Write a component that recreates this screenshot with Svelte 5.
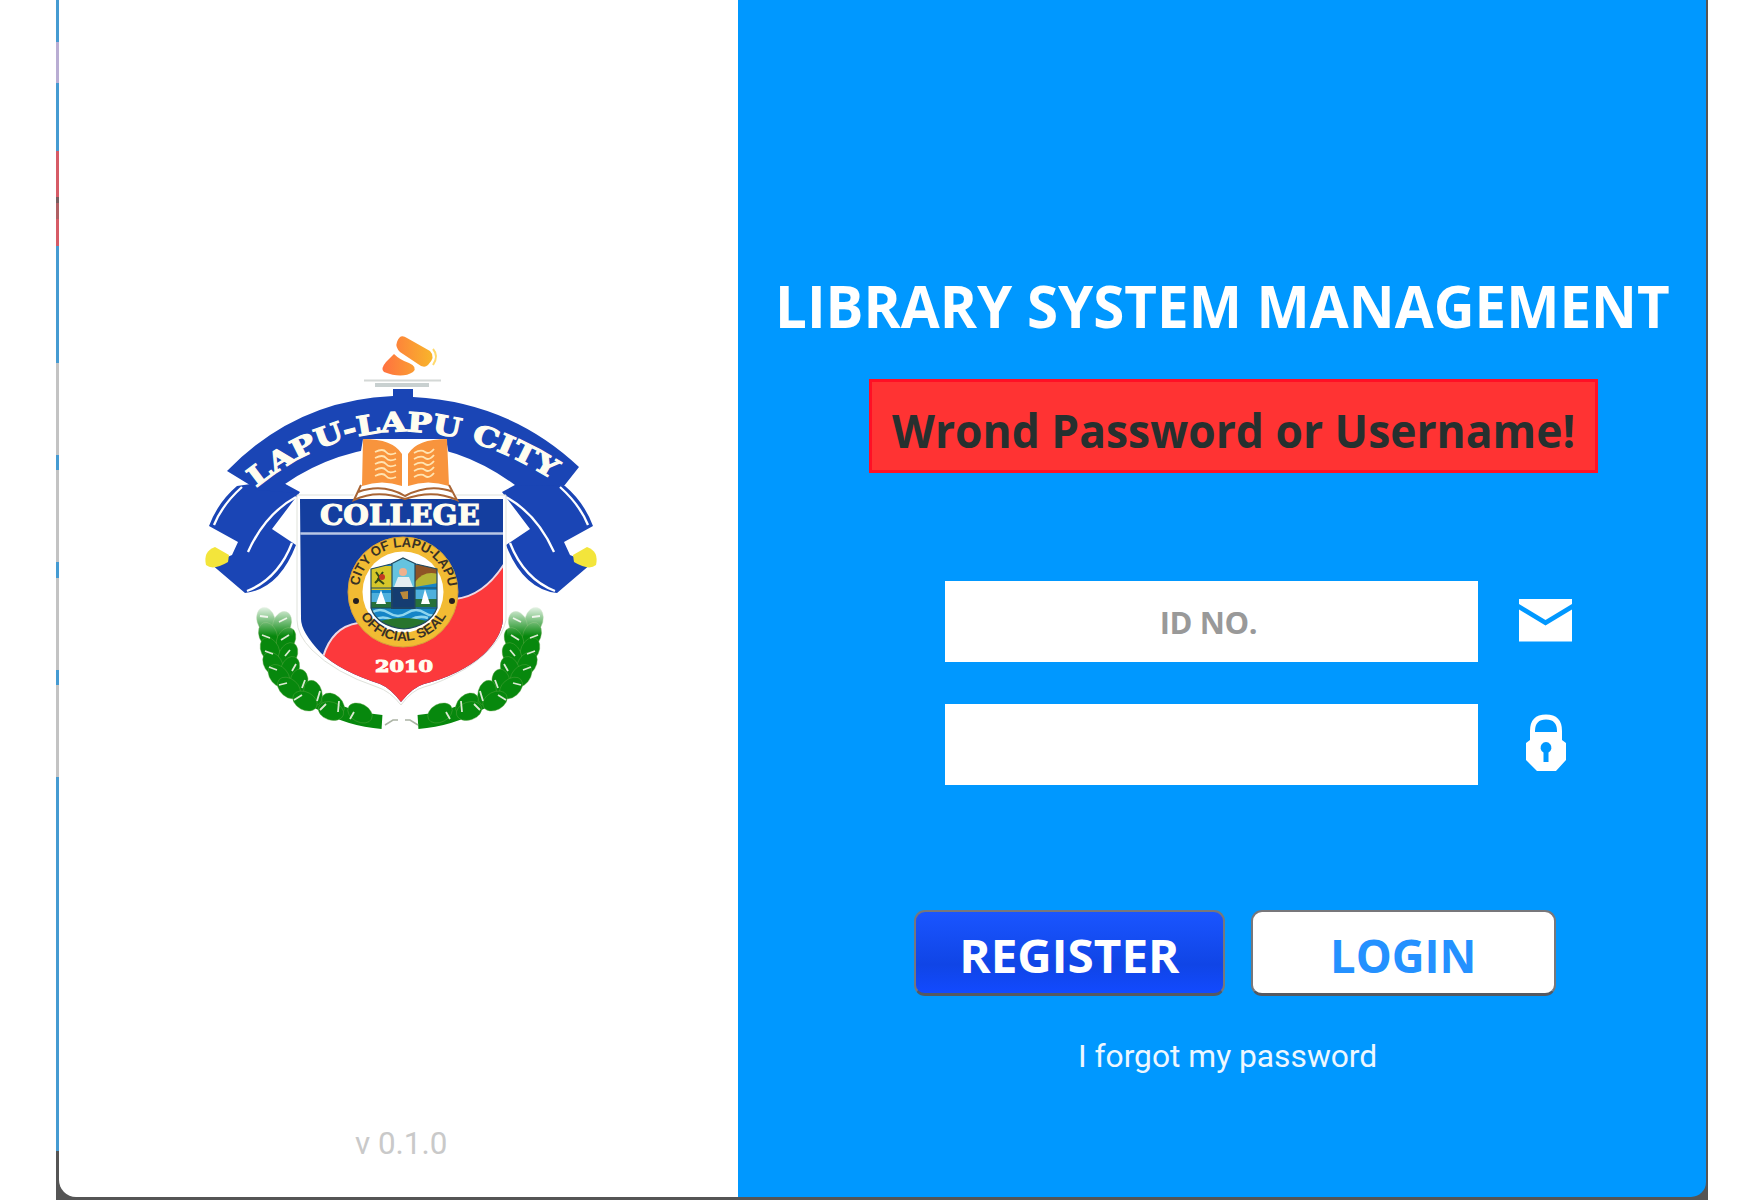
<script>
  const leaves = [
    [266, 620, 75], [282, 624, 110], [268, 635, 70], [286, 640, 115], [270, 650, 65], [288, 655, 115],
    [273, 664, 58], [290, 669, 112], [279, 676, 50], [299, 682, 98], [289, 688, 40], [313, 693, 75],
    [305, 701, 28], [333, 704, 42], [331, 711, 18], [360, 713, 28]
  ];
</script>

{#snippet branch()}
  <path d="M274 618Q277 684 318 702Q350 720 382 722" fill="none" stroke="#07880d" stroke-width="14" />
  {#each leaves as [x, y, a]}
    <ellipse cx={x} cy={y} rx="13" ry="9" transform="rotate({a} {x} {y})" fill="#07880d" stroke="#5fa646" stroke-width=".4" />
  {/each}
  <path d="M260 616l8 1m11 5 8-4M262 635l8 3m11 2 8-5M265 651l8 3m12 2 5-6M269 667l8 3m15 1 4-7M279 685l8-2m15 5 3-8M294 700l8-5m15 6 3-10M320 710l6-6m12 8 1-11M350 719l4-7" stroke="#dbe9d2" stroke-width="1.8" />
  <rect x="248" y="598" width="45" height="38" fill="url(#fade)" />
{/snippet}

{#snippet ribbon()}
  <path d="M237 486Q218 502 209 526L238 542 232 555 211 564 245 593Q279 589 296 545L272 529 300 492 278 480Z" fill="#1a45b5" />
  <path d="M242 487Q222 505 214 525M296 497Q265 514 248 552M292 543Q278 579 247 591" fill="none" stroke="#fff" stroke-width="2.3" />
  <path d="M215 547Q203 551 206 565Q213 571 228 562L229 555Z" fill="#f3e53b" />
{/snippet}

<main>
  <div class="edge"></div>
  <section class="brand">
    <svg class="crest" viewBox="190 320 420 420" role="img" aria-label="Lapu-Lapu City College">
      <defs>
        <linearGradient id="flame"><stop stop-color="#ff7140" /><stop offset="1" stop-color="#f8b52b" /></linearGradient>
        <linearGradient id="fade" x2="0" y2="1"><stop offset=".15" stop-color="#fff" /><stop offset="1" stop-color="#fff" stop-opacity="0" /></linearGradient>
        <clipPath id="shield"><path d="M300 499H503V619Q502 637 483 655Q460 675 424 684Q413 687 401 702Q390 688 380 684Q340 671 321 653Q301 632 301 619Z" /></clipPath>
        <clipPath id="arms"><path d="M371 569L391 564 403 558 416 564 437 569V608Q430 626 404 629Q377 626 371 608Z" /></clipPath>
        <path id="motto" d="M256 488Q395 376 562 486" />
        <path id="city" d="M358.500 592A45 45 0 1 1 448.500 592" />
        <path id="seal" d="M354.500 592A49 49 0 0 0 452.500 592" />
      </defs>
      <path d="M397 342Q400 333 407 338L430 351Q436 357 428 365Q424 369 418 364L400 352Q395 347 397 342ZM394 354Q400 360 409 363Q418 367 413 372Q402 379 384 372Q380 369 386 362Z" fill="url(#flame)" />
      <path d="M433 349Q439 356 433 365" fill="none" stroke="#ffda6d" stroke-width="2" />
      <path d="M364 380.500H441" stroke="#d4d8d6" stroke-width="2" /><path d="M375 385H429" stroke="#c8d0d0" stroke-width="4" />
      {@render ribbon()}
      <g transform="translate(802 0) scale(-1 1)">{@render ribbon()}</g>
      <path d="M393 389H413V397Q510 402 579 467L564 486 515 485Q460 445 403 445Q335 449 285 484L295 493 258 490 227 471Q296 400 393 396Z" fill="#1a45b5" />
      <text class="slab motto"><textPath href="#motto" textLength="319" lengthAdjust="spacingAndGlyphs">LAPU-LAPU CITY</textPath></text>
      <path d="M297 495H506V620Q500 647 465 669Q440 683 424 687Q412 690 401 705Q390 691 377 687Q335 673 312 650Q297 635 297 620Z" fill="#fff" stroke="#dfe2db" stroke-width="1" />
      <g clip-path="url(#shield)">
        <path d="M298 499H507V706H298Z" fill="#143e9f" />
        <path d="M323 657Q332 627 358 623L455 599Q485 596 506 561V706H320Z" fill="#fc393c" stroke="#ecd8e5" stroke-width="2" />
        <path d="M300 533.500H503" stroke="#b9c7e5" stroke-width="2.500" />
      </g>
      <text class="slab college" x="320" y="524.500" textLength="160" lengthAdjust="spacingAndGlyphs">COLLEGE</text>
      <path d="M363 439L353 499 397 494 407 499 418 494 457 500 446 439Z" fill="#fff" />
      <path d="M363 439Q393 439 402 454V486Q382 479 362 486ZM447 439Q417 439 408 454V486Q428 479 449 486Z" fill="#f8943d" />
      <path d="M361 485L354 500Q377 489 405 499Q433 489 457 500L449 485M358 492Q383 483 405 496Q430 483 453 492" fill="none" stroke="#a96535" stroke-width="2" />
      {#each [0, 1, 2, 3, 4] as row}
        <path d="M375 {452 + row * 6}q8-4 11 0t10 1M414 {453 + row * 6}q7-4 11-1t9-3" fill="none" stroke="#ffe4b2" stroke-width="1.800" />
      {/each}
      <circle cx="403" cy="592" r="55" fill="#f2bb33" stroke="#d6a13a" stroke-width="1" />
      <circle cx="403" cy="592" r="40.500" fill="#fff" />
      <g clip-path="url(#arms)">
        <path d="M369 557H438V631H369Z" fill="#1585c7" />
        <path d="M369 566H392V590H369Z" fill="#d6c72a" /><path d="M376 572l4 6-5 5m8-11-5 7 6 5" stroke="#334a18" stroke-width="2" fill="none" /><circle cx="382" cy="577" r="3" fill="#c33822" />
        <path d="M392 558H415V590H392Z" fill="#65c3df" /><circle cx="403" cy="572" r="4" fill="#efb08d" />
        <path d="M415 565H438V575Q425 571 415 583Z" fill="#8e5426" /><path d="M415 582Q424 570 438 574V583L415 587Z" fill="#b4b535" />
        <path d="M370 593H392V605H370ZM415 590H438V604H415Z" fill="#4eb0dd" /><path d="M370 602H392V608H370ZM415 599H438V607H415Z" fill="#27713b" />
        <path d="M381 590L386 604H376ZM425 589L430 604H421Z" fill="#fff" />
        <path d="M398 577H409L413 587H394Z" fill="#e3edf1" /><path d="M391 587H415V609H391Z" fill="#153d71" /><path d="M400 592l8-1v8h-5z" fill="#b98a3b" />
        <path d="M371 613q9-6 18 0t18 0 18 0 18-2M374 620q9-5 18 0t18 0 18-2" fill="none" stroke="#8ed5ee" stroke-width="2.500" /><path d="M377 622Q403 614 430 622V631H377Z" fill="#28742d" />
      </g>
      <path d="M371 569L391 564 403 558 416 564 437 569V608Q430 626 404 629Q377 626 371 608ZM392 564V609M415 564V609M371 588H437M371 608H437" fill="none" stroke="#23495d" stroke-width="1.200" />
      <circle cx="356" cy="601" r="3" fill="#241e20" /><circle cx="452" cy="601" r="3" fill="#241e20" />
      <text class="ring"><textPath href="#city" startOffset="6" textLength="130" lengthAdjust="spacingAndGlyphs">CITY OF LAPU-LAPU</textPath></text>
      <text class="ring"><textPath href="#seal" startOffset="25" textLength="104" lengthAdjust="spacingAndGlyphs">OFFICIAL SEAL</textPath></text>
      <text class="slab year" x="375" y="671.500" textLength="58" lengthAdjust="spacingAndGlyphs">2010</text>
      {@render branch()}
      <g transform="translate(800 0) scale(-1 1)">{@render branch()}</g>
      <path d="M385 725l8-5h5M418 725l-8-5h-5" fill="none" stroke="#aab3a4" stroke-width="1.500" />
    </svg>
    <p class="version"><span>v 0.1.0</span></p>
  </section>
  <section class="login">
    <h1><span>LIBRARY SYSTEM MANAGEMENT</span></h1>
    <div class="alert" role="alert"><span>Wrond Password or Username!</span></div>
    <form onsubmit={(e) => e.preventDefault()}>
      <div class="field">
        <input aria-label="ID number" placeholder="ID NO." />
        <svg width="54" height="43" viewBox="0 0 54 43"><path d="M0 0H53V5L26.500 21 0 5ZM0 10.500L26.500 26.500 53 10.500V42.500H0Z" fill="#fff" /></svg>
      </div>
      <div class="field">
        <input aria-label="Password" type="password" />
        <svg width="54" height="58" viewBox="0 0 54 58"><path d="M13.500 26V17Q13.500 3 27 3T40.500 17V26" fill="none" stroke="#fff" stroke-width="5" /><path d="M16 18H38L43 22V26L47 29V46L37 57H18L7 46V29L11 26V22Z" fill="#fff" /><path d="M24.500 48V38.500A5.500 5.500 0 1 1 29.500 38.500V48Z" fill="#0098ff" /></svg>
      </div>
      <div class="actions">
        <button class="register" type="button"><span>REGISTER</span></button>
        <button class="signin" type="submit"><span>LOGIN</span></button>
      </div>
    </form>
    <p class="forgot"><span>I forgot my password</span></p>
  </section>
</main>

<style>
  :global(body) { margin: 0; background: #fff; }
  * { box-sizing: border-box; }
  main { width: 1652px; height: 1200px; margin-left: 56px; display: grid; grid-template-columns: 3px 679px 970px; background: #555; }
  span { display: inline-block; white-space: nowrap; }
  .edge { background: linear-gradient(#459bd2 0 42px, #b9add3 42px 83px, #459bd2 83px 151px, #d65b66 151px 197px, #775e60 197px 203px, #b05f63 203px 219px, #d65b66 219px 246px, #459bd2 246px 363px, #c3c3c3 363px 455px, #459bd2 455px 470px, #c3c3c3 470px 562px, #459bd2 562px 578px, #c3c3c3 578px 670px, #459bd2 670px 685px, #c3c3c3 685px 777px, #459bd2 777px 1151px, #555 1151px); }
  .brand { height: 1197px; background: #fff; border-bottom-left-radius: 17px; display: flex; flex-direction: column; padding: 320px 0 0 131px; }
  .crest { width: 420px; height: 420px; flex: none; }
  .slab { font-family: "DejaVu Serif", serif; font-weight: 700; fill: #fffdf0; stroke: #fffdf0; stroke-width: 1.1; }
  .motto { font-size: 27px; }
  .college { font-size: 27px; }
  .year { font-size: 17px; }
  .ring { font: 700 13.5px "Liberation Sans", sans-serif; fill: #393126; }
  .version { margin: 383px 0 0 165px; font: 32px/40px Roboto, sans-serif; color: #c9c9c9; }
  .version span { transform: scaleX(.98); transform-origin: left; }
  .login { height: 1197px; width: 968px; background: #0098ff; border-bottom-right-radius: 15px; padding-top: 265px; }
  h1 { margin: 0 0 0 37px; height: 80px; font: 700 59px/80px "Open Sans", sans-serif; color: #fff; }
  h1 span { transform: scaleX(.957); transform-origin: left; }
  .alert { margin: 34px 0 0 131px; width: 729px; height: 94px; border: 3px solid #ff1025; background: #f33; font: 700 46px/96px "Open Sans", sans-serif; color: #26302f; padding-left: 20px; }
  .alert span { transform: scaleX(.965); transform-origin: left; }
  form { margin-top: 108px; }
  .field { display: flex; align-items: center; gap: 41px; margin: 0 0 42px 207px; }
  .field svg { margin-bottom: 3px; }
  input { width: 533px; height: 81px; border: 0; border-radius: 0; padding: 0 6px 0 0; background: #fff; text-align: center; font: 700 31px "Open Sans", sans-serif; letter-spacing: -.4px; }
  input::placeholder { color: #999; opacity: 1; }
  .actions { display: flex; gap: 26px; padding: 83px 0 0 176px; }
  button { height: 86px; border: 2.500px solid #77777b; border-bottom: 3px solid #555961; border-radius: 11px; padding: 0; font: 700 46px/76px "Open Sans", sans-serif; }
  button span { position: relative; top: 2px; }
  .register { width: 311px; background: linear-gradient(#1a55ff, #1045e6 65%, #124aff); color: #fff; }
  .register span { transform: scaleX(1.035); }
  .signin { width: 305px; background: #fff; color: #2491ff; }
  .signin span { transform: scaleX(.985); }
  .forgot { margin: 40px 0 0 340px; font: 32px/40px Roboto, sans-serif; color: #edf7ff; }
  .forgot span { transform: scaleX(.992); transform-origin: left; }
</style>
